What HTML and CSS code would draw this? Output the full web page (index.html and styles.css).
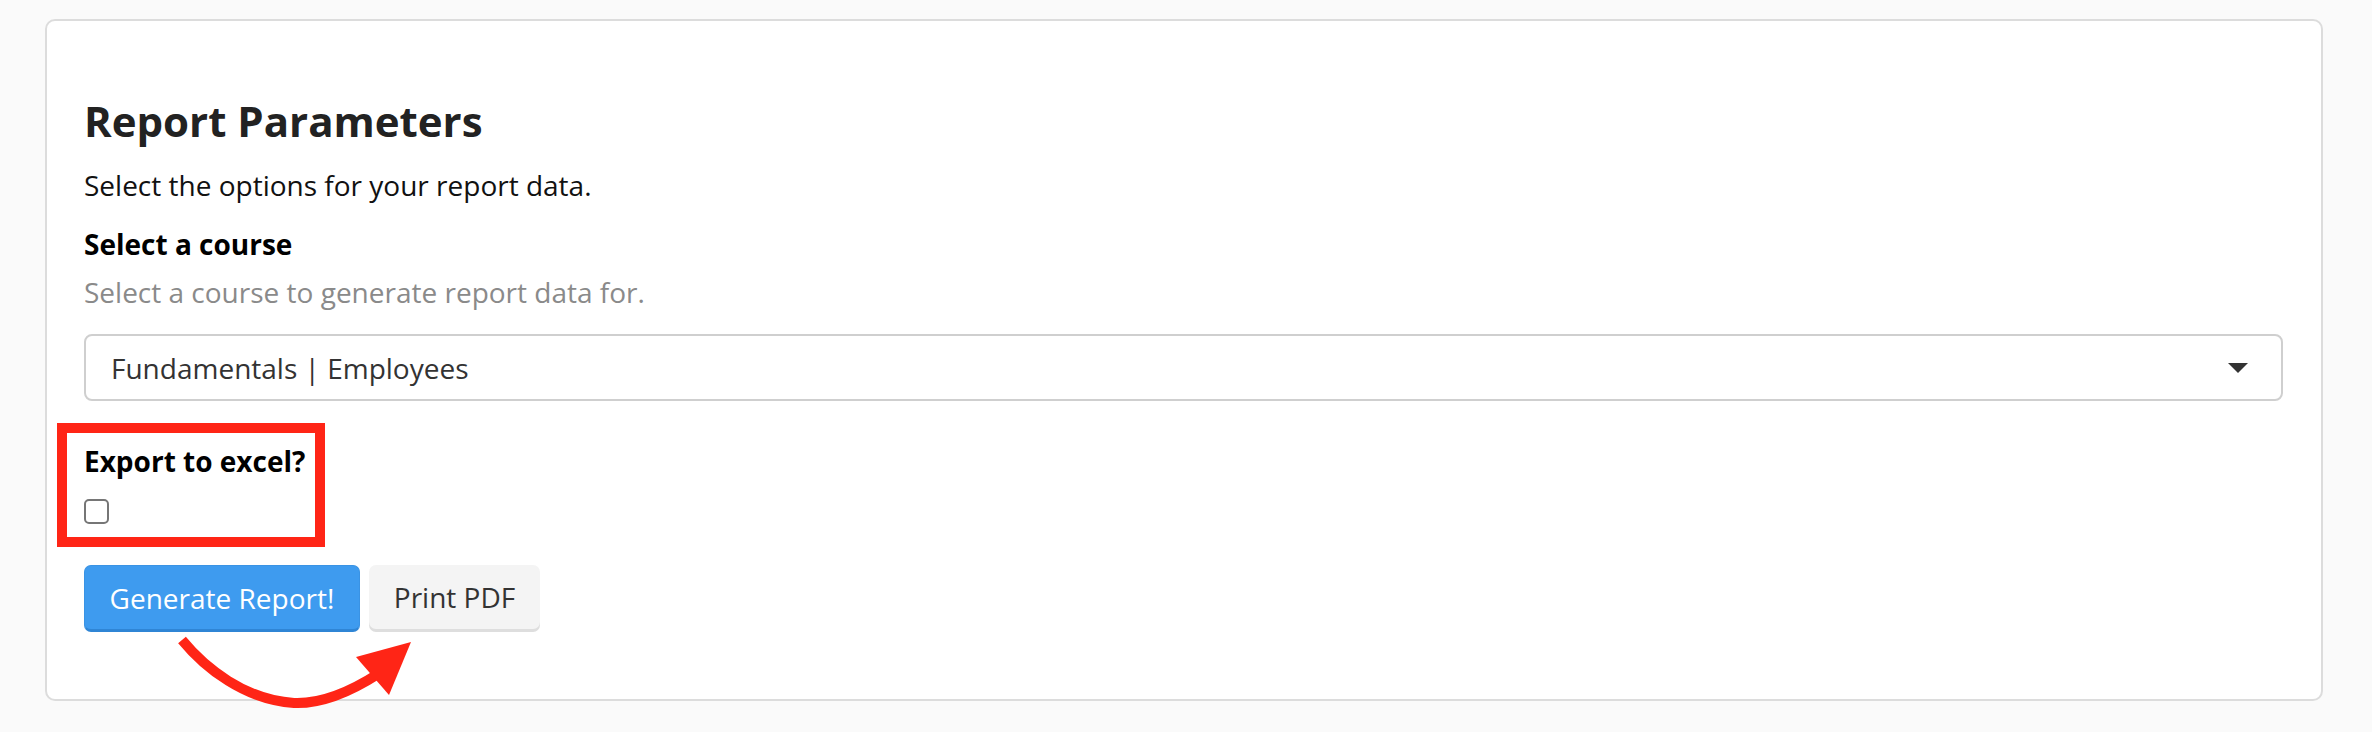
FILE: index.html
```html
<!DOCTYPE html>
<html lang="en">
<head>
<meta charset="utf-8">
<title>Report Parameters</title>
<link rel="stylesheet" href="styles.css">
</head>
<body>
<div class="page">
  <section class="card">
    <h2 class="title">Report Parameters</h2>
    <p class="lead">Select the options for your report data.</p>
    <div class="field">
      <label class="label">Select a course</label>
      <p class="help">Select a course to generate report data for.</p>
      <div class="select">
        <span class="select-value">Fundamentals | Employees</span>
        <span class="caret"></span>
      </div>
    </div>
    <div class="highlight">
      <label class="label">Export to excel?</label>
      <div class="check-row"><span class="checkbox"></span></div>
    </div>
    <div class="actions">
      <button class="btn btn-primary">Generate Report!</button>
      <button class="btn btn-light">Print PDF</button>
    </div>
  </section>
  <svg class="annotation" width="2372" height="732" viewBox="0 0 2372 732">
    <path d="M182,640 C205,668 245,700 294,703 C320,704 350,692 378,674" fill="none" stroke="#ff2516" stroke-width="10"/>
    <polygon points="411,642 356,657 389,695" fill="#ff2516"/>
  </svg>
</div>
</body>
</html>
```
FILE: styles.css
```css
html, body {
  margin: 0;
  padding: 0;
  background: #fafafa;
}
body {
  font-family: "Open Sans", "Liberation Sans", sans-serif;
  font-size: 28px;
  line-height: 40px;
  color: #111;
}
.page {
  position: relative;
  width: 2372px;
  height: 732px;
  box-sizing: border-box;
  padding: 19px 49px 0 45px;
}
.card {
  background: #fff;
  border: 2px solid #dcdcdc;
  border-radius: 10px;
  padding: 77px 38px 67px 37px;
}
.title {
  margin: 0 0 21px;
  font-size: 42px;
  line-height: 46px;
  font-weight: 700;
  color: #222;
}
.lead {
  margin: 0 0 19px;
  color: #111;
}
.label {
  display: block;
  font-weight: 700;
  color: #000;
}
.help {
  margin: 8px 0 22px;
  color: #8a8a8a;
}
.select {
  display: flex;
  align-items: center;
  justify-content: space-between;
  height: 63px;
  border: 2px solid #cfcfcf;
  border-radius: 8px;
  padding: 0 33px 0 25px;
  color: #333;
}
.caret {
  width: 0;
  height: 0;
  border-left: 10px solid transparent;
  border-right: 10px solid transparent;
  border-top: 10px solid #333;
}
.highlight {
  display: inline-block;
  margin: 22px 0 18px -27px;
  border: 10px solid #ff2516;
  padding: 8px 10px 13px 17px;
}
.check-row {
  display: flex;
  margin-top: 18px;
}
.checkbox {
  display: block;
  width: 21px;
  height: 21px;
  border: 2px solid #767676;
  border-radius: 5px;
  background: #fff;
}
.actions {
  display: flex;
  gap: 9px;
}
.btn {
  font-family: inherit;
  font-size: 28px;
  line-height: 40px;
  height: 67px;
  padding: 0;
  border-radius: 7px;
  white-space: nowrap;
  text-align: center;
  cursor: pointer;
}
.btn-primary {
  width: 276px;
  background: #3e9bef;
  color: #fff;
  border: 1px solid #3a93e4;
  border-bottom: 3px solid #2f85d5;
}
.btn-light {
  width: 171px;
  background: #f4f4f4;
  color: #333;
  border: none;
  box-shadow: 0 3px 0 #dedede;
  height: 64px;
}
.annotation {
  position: absolute;
  left: 0;
  top: 0;
  pointer-events: none;
}
```
